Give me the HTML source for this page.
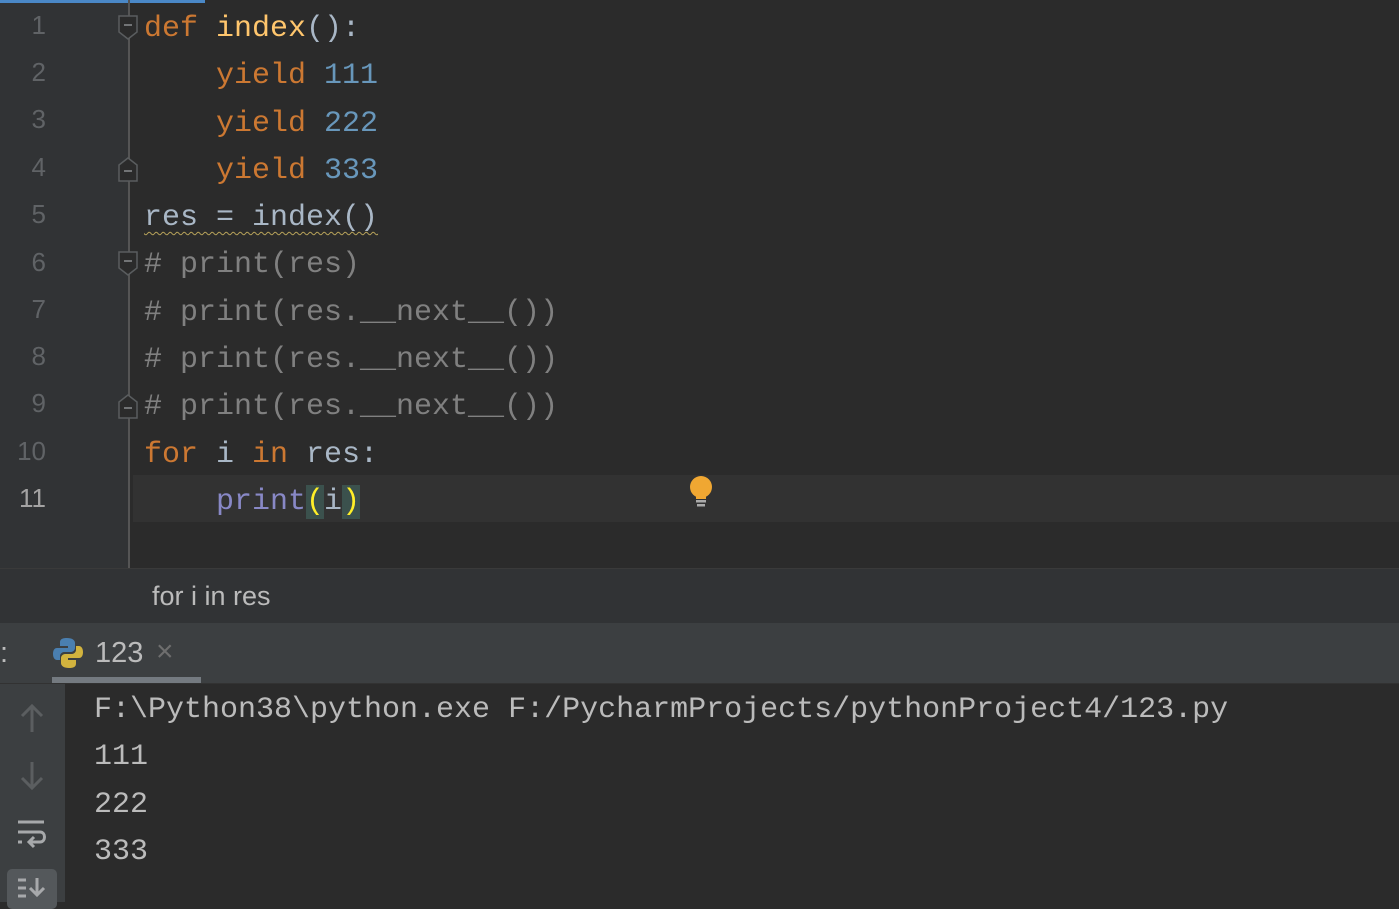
<!DOCTYPE html>
<html><head><style>
*{margin:0;padding:0;box-sizing:border-box}
body{width:1399px;height:902px;overflow:hidden;background:#2b2b2b;position:relative;font-family:"Liberation Mono",monospace}
.gut{position:absolute;left:0;top:0;width:128px;height:568px;background:#313335}
.gline{position:absolute;left:128px;top:0;width:2px;height:568px;background:#555}
.ed{position:absolute;left:130px;top:0;right:0;height:568px;background:#2b2b2b}
.cur{position:absolute;left:133px;top:475px;right:0;height:47px;background:#323232}
.ln{position:absolute;left:0;width:46px;text-align:right;color:#606366;font-size:26px;font-family:"Liberation Sans",sans-serif}
.code{position:absolute;left:144px;font-size:30px;white-space:pre;color:#a9b7c6;line-height:47.3px}
.k{color:#cc7832}.f{color:#ffc66d}.n{color:#6897bb}.c{color:#808080}.b{color:#8888c6}
.wav{text-decoration:underline wavy #b8a35a;text-underline-offset:6px;text-decoration-thickness:1px}
.crumb{position:absolute;left:0;top:568px;width:1399px;height:55px;background:#313335;border-top:1px solid #3a3a3a;font-family:"Liberation Sans",sans-serif;color:#bbbbbb;font-size:27px;padding:12px 0 0 152px}
.tabs{position:absolute;left:0;top:623px;width:1399px;height:61px;background:#3c3f41;border-bottom:1px solid #323232;font-family:"Liberation Sans",sans-serif;color:#bbbbbb;font-size:29px}
.side{position:absolute;left:0;top:684px;width:65px;height:218px;background:#3c3f41}
.con{position:absolute;left:94px;top:687px;font-size:30px;color:#bbbbbb;line-height:47.3px;white-space:pre}
</style></head><body>
<div class="gut"></div>
<div style="position:absolute;left:0;top:0;width:205px;height:3px;background:#4a88c7"></div>
<div class="gline"></div>
<div class="cur"></div>
<div class="ln" style="top:10px">1</div>
<div class="ln" style="top:57px">2</div>
<div class="ln" style="top:104px">3</div>
<div class="ln" style="top:152px">4</div>
<div class="ln" style="top:199px">5</div>
<div class="ln" style="top:247px">6</div>
<div class="ln" style="top:294px">7</div>
<div class="ln" style="top:341px">8</div>
<div class="ln" style="top:388px">9</div>
<div class="ln" style="top:436px">10</div>
<div class="ln" style="top:483px;color:#a4a3a3">11</div>
<svg style="position:absolute;left:118px;top:15px" width="20" height="28"><path d="M1 1H19V17L10 24L1 17Z" fill="#2b2b2b" stroke="#5a5d5f" stroke-width="1.5"/><path d="M6 10H14" stroke="#8a8d8f" stroke-width="1.5"/></svg>
<svg style="position:absolute;left:118px;top:155px" width="20" height="28"><path d="M1 26H19V10L10 3L1 10Z" fill="#2b2b2b" stroke="#5a5d5f" stroke-width="1.5"/><path d="M6 16H14" stroke="#8a8d8f" stroke-width="1.5"/></svg>
<svg style="position:absolute;left:118px;top:251px" width="20" height="28"><path d="M1 1H19V17L10 24L1 17Z" fill="#2b2b2b" stroke="#5a5d5f" stroke-width="1.5"/><path d="M6 10H14" stroke="#8a8d8f" stroke-width="1.5"/></svg>
<svg style="position:absolute;left:118px;top:392px" width="20" height="28"><path d="M1 26H19V10L10 3L1 10Z" fill="#2b2b2b" stroke="#5a5d5f" stroke-width="1.5"/><path d="M6 16H14" stroke="#8a8d8f" stroke-width="1.5"/></svg>
<div class="code" style="top:6px"><span class="k">def</span> <span class="f">index</span>():
    <span class="k">yield</span> <span class="n">111</span>
    <span class="k">yield</span> <span class="n">222</span>
    <span class="k">yield</span> <span class="n">333</span>
<span class="wav">res = index()</span>
<span class="c"># print(res)</span>
<span class="c"># print(res.__next__())</span>
<span class="c"># print(res.__next__())</span>
<span class="c"># print(res.__next__())</span>
<span class="k">for</span> i <span class="k">in</span> res:
    <span class="b">print</span><span style="background:#3b514d;color:#ffef28">(</span>i<span style="background:#3b514d;color:#ffef28">)</span></div>
<svg style="position:absolute;left:688px;top:475px" width="26" height="34"><ellipse cx="13" cy="12" rx="11" ry="11" fill="#f0a732"/><rect x="8" y="18" width="10" height="6" fill="#f0a732"/><rect x="8" y="25" width="10" height="2.5" fill="#aaa"/><rect x="9" y="29" width="8" height="2.5" fill="#aaa"/></svg>
<div class="crumb">for i in res</div>
<div class="tabs">
<span style="position:absolute;left:0;top:14px">:</span>
<svg style="position:absolute;left:52px;top:14px" width="32" height="32"><path d="M15 1C8 1 8 4 8 6V9H16V11H5C2 11 1 14 1 17C1 21 3 23 5 23H8V19C8 17 10 15 12 15H19C21 15 23 13 23 11V6C23 3 20 1 15 1Z" fill="#4a7fb0"/><path d="M17 31C24 31 24 28 24 26V23H16V21H27C30 21 31 18 31 15C31 11 29 9 27 9H24V13C24 15 22 17 20 17H13C11 17 9 19 9 21V26C9 29 12 31 17 31Z" fill="#d2b33e"/></svg>
<span style="position:absolute;left:95px;top:14px">123</span>
<span style="position:absolute;left:156px;top:12px;color:#6e6e6e;font-size:30px">×</span>
<div style="position:absolute;left:52px;top:54px;width:149px;height:6px;background:#747a80"></div>
</div>
<div class="side">
<svg style="position:absolute;left:18px;top:18px" width="28" height="32"><path d="M14 30V4M4 14L14 4L24 14" stroke="#5b5e60" stroke-width="3" fill="none"/></svg>
<svg style="position:absolute;left:18px;top:76px" width="28" height="32"><path d="M14 2V28M4 18L14 28L24 18" stroke="#5b5e60" stroke-width="3" fill="none"/></svg>
<svg style="position:absolute;left:16px;top:134px" width="32" height="36"><path d="M2 4H28M2 14H24C30 14 30 24 24 24H14M18 19L13 24L18 29M2 24H6" stroke="#a7a9ab" stroke-width="3" fill="none"/></svg>
<div style="position:absolute;left:7px;top:185px;width:50px;height:40px;background:#54585b;border-radius:5px"></div>
<svg style="position:absolute;left:16px;top:192px" width="32" height="26"><path d="M2 4H10M2 12H10M2 20H10M21 2V18M14 12L21 19L28 12" stroke="#a7a9ab" stroke-width="3" fill="none"/></svg>
</div>
<div class="con">F:\Python38\python.exe F:/PycharmProjects/pythonProject4/123.py
111
222
333</div>
</body></html>
